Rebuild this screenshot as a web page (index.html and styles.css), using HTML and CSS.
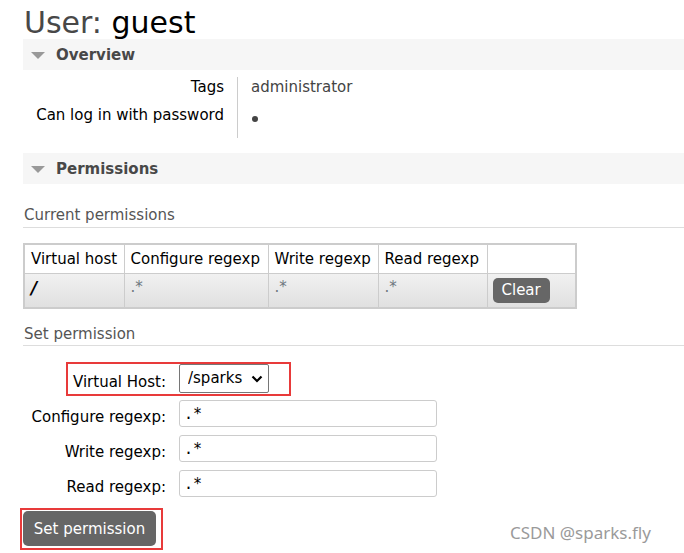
FILE: index.html
```html
<!DOCTYPE html>
<html>
<head>
<meta charset="utf-8">
<link rel="stylesheet" href="styles.css">
</head>
<body>
<div class="page">
  <h1 class="title"><span class="title-key">User:</span> <b class="title-val">guest</b></h1>

  <div class="section-bar"><span class="tri"></span><span class="section-name">Overview</span></div>
  <div class="facts">
    <div class="fact-label r1">Tags</div><div class="fact-value r1">administrator</div>
    <div class="fact-label r2">Can log in with password</div><div class="fact-value r2"><span class="dot"></span></div>
  </div>

  <div class="section-bar perm-bar"><span class="tri"></span><span class="section-name">Permissions</span></div>

  <h3 class="subhead">Current permissions</h3>
  <table class="perm-table">
    <thead>
      <tr><th class="c1">Virtual host</th><th class="c2">Configure regexp</th><th class="c3">Write regexp</th><th class="c4">Read regexp</th><th class="c5"></th></tr>
    </thead>
    <tbody>
      <tr><td class="vh">/</td><td class="rx">.*</td><td class="rx">.*</td><td class="rx">.*</td><td class="btn-cell"><button class="btn-small">Clear</button></td></tr>
    </tbody>
  </table>

  <h3 class="subhead subhead-set">Set permission</h3>
  <form class="perm-form">
    <div class="form-row"><label class="form-label">Virtual Host:</label>
      <span class="select-wrap"><select class="vh-select"><option>/sparks</option></select>
        <svg class="chev" width="12" height="8" viewBox="0 0 12 8"><path d="M1.5 1.5 L6 6 L10.5 1.5" fill="none" stroke="#000" stroke-width="2.2"/></svg>
      </span>
    </div>
    <div class="form-row"><label class="form-label">Configure regexp:</label><input class="rx-input" value=".*"></div>
    <div class="form-row"><label class="form-label">Write regexp:</label><input class="rx-input" value=".*"></div>
    <div class="form-row"><label class="form-label">Read regexp:</label><input class="rx-input" value=".*"></div>
    <span class="mark mark-vh"></span>
  </form>
  <div class="submit-mark"><button class="btn-big">Set permission</button></div>

  <div class="watermark">CSDN @sparks.fly</div>
</div>
</body>
</html>
```
FILE: styles.css
```css
html, body { margin: 0; padding: 0; background: #fff; }
body { font-family: "DejaVu Sans", Verdana, sans-serif; font-size: 15px; color: #000; }
.page { position: relative; width: 684px; height: 553px; overflow: hidden; padding-left: 23px; box-sizing: border-box; }

.title { margin: 0; padding: 6px 0 0 1px; height: 39px; box-sizing: border-box; font-size: 30px; line-height: 33px; font-weight: normal; }
.title-key { color: #484848; }
.title-val { color: #000; font-weight: normal; }

.section-bar { height: 31px; background: #f6f6f6; display: flex; align-items: center; }
.tri { width: 0; height: 0; border-left: 7px solid transparent; border-right: 7px solid transparent; border-top: 7px solid #999; margin: 1px 11px 0 8px; }
.section-name { font-weight: bold; font-size: 15px; color: #484848; }
.perm-bar { margin-top: 15px; }

.facts { display: grid; grid-template-columns: 215px 1fr; padding-top: 7px; }
.fact-label { text-align: right; padding-right: 13px; border-right: 1px solid #ccc; line-height: 18px; }
.fact-value { padding-left: 13px; line-height: 18px; color: #444; }
.r1 { padding-top: 1px; padding-bottom: 10px; }
.r2 { padding-bottom: 14px; }
.dot { display: inline-block; width: 6px; height: 6px; border-radius: 50%; background: #444; margin-left: 1px; vertical-align: -2px; }

.subhead { margin: 0; font-weight: normal; font-size: 15px; color: #555; padding: 22px 0 3px 1px; line-height: 18px; border-bottom: 1px solid #ddd; }
.subhead-set { padding-top: 16px; padding-bottom: 2px; }

.perm-table { border-collapse: collapse; table-layout: fixed; width: 552px; margin-top: 15px; border: 2px solid #ccc; }
.perm-table th, .perm-table td { border: 1px solid #ccc; text-align: left; box-sizing: border-box; }
.perm-table th { font-weight: normal; height: 29px; padding: 0 6px; background: #fff; white-space: nowrap; }
.c1 { width: 100px; } .c2 { width: 144px; } .c3 { width: 110px; } .c4 { width: 109px; } .c5 { width: 89px; }
.perm-table tbody tr { background: linear-gradient(#f1f1f1, #e0e0e0); }
.perm-table td { height: 35px; padding: 0 6px; vertical-align: top; }
.vh { font-weight: bold; font-style: italic; font-size: 17px; padding-top: 4px !important; color: #000; }
.rx { color: #6f7780; padding-top: 5px !important; line-height: 16px; }
.btn-cell { vertical-align: middle !important; padding: 0 5px !important; }
.btn-small { background: #666; color: #fff; border: 0; border-radius: 5px; font-family: "DejaVu Sans", Verdana, sans-serif; font-size: 15px; padding: 0 9px; height: 25px; line-height: 25px; margin-top: 1px; }

.perm-form { position: relative; margin-top: 15px; width: 440px; }
.form-row { display: grid; grid-template-columns: 143px 1fr; column-gap: 13px; align-items: center; height: 35px; }
.form-label { text-align: right; padding-top: 6px; }
.select-wrap { position: relative; display: inline-block; width: 90px; height: 29px; }
.vh-select { appearance: none; -webkit-appearance: none; width: 90px; height: 29px; border: 1px solid #767676; border-radius: 2px; background: #fff; font-family: "DejaVu Sans", Verdana, sans-serif; font-size: 15px; padding: 0 0 0 8px; color: #000; line-height: 27px; }
.chev { position: absolute; right: 6px; top: 11px; pointer-events: none; }
.rx-input { width: 258px; height: 27px; box-sizing: border-box; border: 1px solid #ccc; border-radius: 3px; padding: 0 4px; font-family: "DejaVu Sans Mono", monospace; font-size: 15px; color: #000; }
.mark { position: absolute; border: 2px solid #e83a3a; pointer-events: none; box-sizing: border-box; }
.mark-vh { left: 43px; top: 1px; width: 225px; height: 34px; }

.submit-mark { display: inline-block; border: 2px solid #e83a3a; padding: 1px 5px 2px 1px; margin-left: -3px; margin-top: 7px; }
.btn-big { display: block; background: #666; color: #fff; border: 0; border-radius: 5px; width: 133px; height: 35px; font-family: "DejaVu Sans", Verdana, sans-serif; font-size: 15px; padding: 0; }

.watermark { position: absolute; left: 510px; top: 521px; font-family: "Noto Sans", "Open Sans", sans-serif; font-size: 17px; color: #9a9a9a; }
```
